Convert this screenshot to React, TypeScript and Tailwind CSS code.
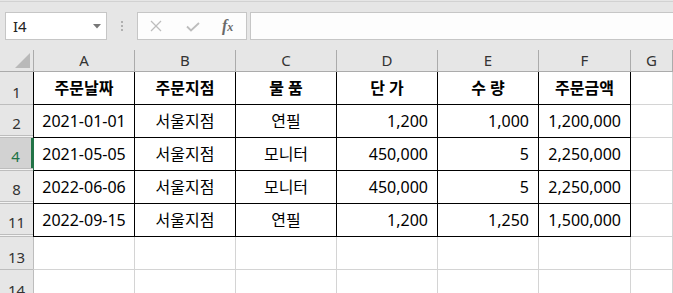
const COLS = ['A', 'B', 'C', 'D', 'E', 'F', 'G'];

type Row = {
  n: string;
  cells?: string[];
  head?: boolean;
  active?: boolean;
  hiddenAfter?: boolean;
};

const ROWS: Row[] = [
  { n: '1', head: true, cells: ['주문날짜', '주문지점', '물 품', '단 가', '수 량', '주문금액'] },
  { n: '2', hiddenAfter: true, cells: ['2021-01-01', '서울지점', '연필', '1,200', '1,000', '1,200,000'] },
  { n: '4', active: true, hiddenAfter: true, cells: ['2021-05-05', '서울지점', '모니터', '450,000', '5', '2,250,000'] },
  { n: '8', hiddenAfter: true, cells: ['2022-06-06', '서울지점', '모니터', '450,000', '5', '2,250,000'] },
  { n: '11', hiddenAfter: true, cells: ['2022-09-15', '서울지점', '연필', '1,200', '1,250', '1,500,000'] },
  { n: '13' },
  { n: '14' },
];

function NameBox() {
  return (
    <div className="w-[102px] h-[28px] bg-white border border-[#c6c6c6] flex items-center justify-between pl-[7px] pr-[5px]">
      <span className="text-[15px] text-[#222] leading-none">I4</span>
      <svg width="8" height="5" viewBox="0 0 8 5">
        <polygon points="0,0 8,0 4,4.5" fill="#777" />
      </svg>
    </div>
  );
}

function FormulaButtons() {
  return (
    <div className="w-[110px] h-[28px] bg-[#fdfdfd] border border-[#c6c6c6] flex items-center pl-[12px]">
      {/* cancel */}
      <svg width="12" height="12" viewBox="0 0 12 12" stroke="#bdbdbd" strokeWidth="1.3" className="shrink-0">
        <line x1="1" y1="1" x2="11" y2="11" />
        <line x1="11" y1="1" x2="1" y2="11" />
      </svg>
      {/* enter */}
      <svg width="14" height="10" viewBox="0 0 14 10" fill="none" stroke="#bdbdbd" strokeWidth="1.8" className="shrink-0 ml-[24px] mt-[2px]">
        <polyline points="1,4.5 5,8.5 13,1" />
      </svg>
      {/* insert function */}
      <span className="ml-[22px] font-['Liberation_Serif',serif] italic text-[#6a6a6a] text-[16px] leading-none font-semibold">
        f<span className="text-[12px]">x</span>
      </span>
    </div>
  );
}

function Toolbar() {
  return (
    <div className="h-[50px] bg-[#e6e6e6] flex flex-col">
      <div className="h-[1px]" />
      <div className="h-[1px] bg-[#d2d2d2]" />
      <div className="flex items-center mt-[10px] pl-[5px]">
        <NameBox />
        <div className="w-[30px] flex flex-col items-center gap-[2px]">
          <div className="w-[2px] h-[2px] bg-[#b0b0b0]" />
          <div className="w-[2px] h-[2px] bg-[#b0b0b0]" />
          <div className="w-[2px] h-[2px] bg-[#b0b0b0]" />
        </div>
        <FormulaButtons />
        <div className="flex-1 h-[28px] ml-[3px] bg-[#fdfdfd] border border-r-0 border-[#c6c6c6]" />
      </div>
    </div>
  );
}

function ColumnHeaders() {
  return (
    <>
      <div className="h-[22px] bg-[#e6e6e6] border-b border-[#ababab] flex items-end justify-end pr-[3px] pb-[3px]">
        <svg width="15" height="15" viewBox="0 0 15 15">
          <polygon points="15,0 15,15 0,15" fill="#b9b9b9" />
        </svg>
      </div>
      {COLS.map((c, i) => (
        <div
          key={c}
          className={`h-[22px] bg-[#e6e6e6] border-b border-r border-[#ababab] flex items-center justify-center text-[15px] text-[#333] ${
            i === 0 ? 'border-l' : ''
          }`}
        >
          {c}
        </div>
      ))}
    </>
  );
}

function RowHeader({ row }: { row: Row }) {
  return (
    <div
      className={`h-[33px] flex flex-col border-b border-[#bdbdbd] ${
        row.active ? 'bg-[#d2d2d2]' : 'bg-[#e6e6e6]'
      }`}
    >
      <div className="flex-1 flex">
        <div
          className={`flex-1 flex items-end justify-center pb-[2px] text-[15px] leading-[20px] ${
            row.active ? 'text-[#217346]' : 'text-[#333]'
          }`}
        >
          {row.n}
        </div>
        {row.active && <div className="w-[2px] bg-[#217346]" />}
      </div>
      {row.hiddenAfter && (
        <>
          <div className="h-[1px] bg-[#bdbdbd]" />
          <div className="h-[1px] bg-[#f4f4f4]" />
        </>
      )}
    </div>
  );
}

function Cell({ row, col }: { row: Row; col: number }) {
  const inTable = !!row.cells && col < 6;
  const text = row.cells && col < 6 ? row.cells[col] : '';
  const right = !row.head && col >= 3;
  const left = col === 0;

  let border = 'border-r border-b border-[#d4d4d4]';
  if (inTable) border = 'border-r border-b border-black';
  if (left) {
    if (row.active) border += ' border-l border-l-[#217346]';
    else if (inTable) border += ' border-l border-l-black';
    else border += ' border-l border-l-[#bdbdbd]';
  }

  return (
    <div
      className={`h-[33px] bg-white flex items-center text-[16px] leading-[20px] text-black ${border} ${
        right ? 'justify-end pr-[9px]' : 'justify-center'
      } ${row.head ? 'font-bold' : ''}`}
    >
      {text}
    </div>
  );
}

export default function App() {
  return (
    <div className="w-[673px] h-[293px] overflow-hidden bg-white font-['Noto_Sans','Noto_Sans_CJK_KR',sans-serif]">
      <Toolbar />
      <div className="grid grid-cols-[33px_102px_101px_101px_101px_101px_92px_1fr]">
        <ColumnHeaders />
        {ROWS.map((row) => (
          <div key={row.n} className="contents">
            <RowHeader row={row} />
            {COLS.map((c, i) => (
              <Cell key={c} row={row} col={i} />
            ))}
          </div>
        ))}
      </div>
    </div>
  );
}
